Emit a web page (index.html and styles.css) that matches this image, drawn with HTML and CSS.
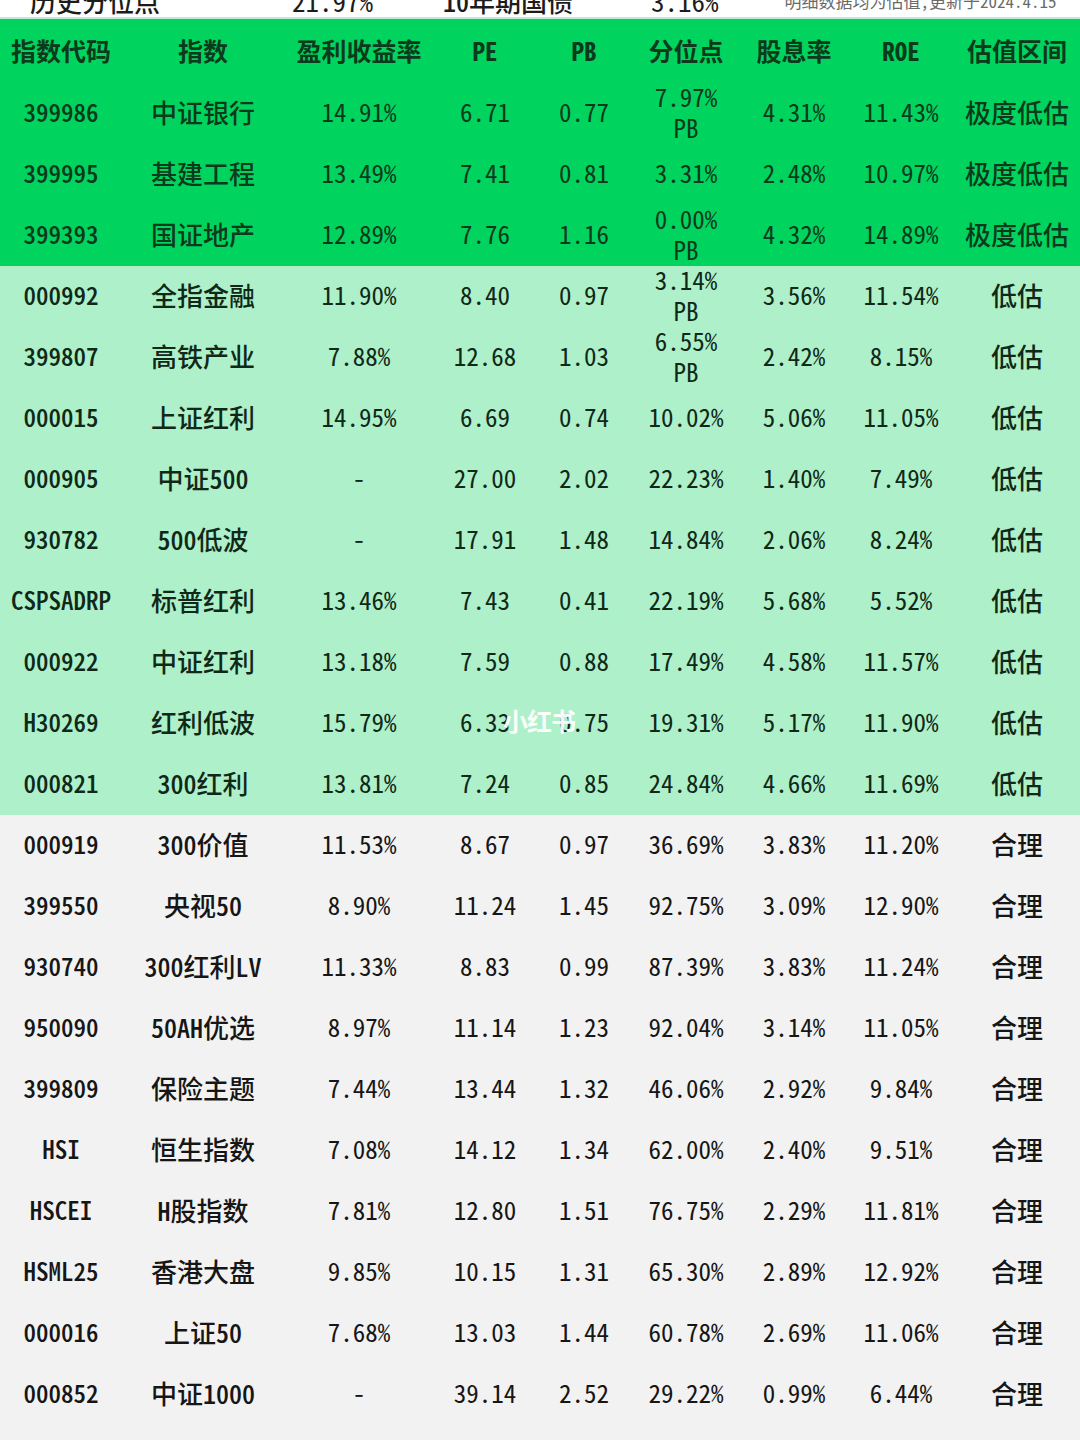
FILE: index.html
```html
<!DOCTYPE html>
<html lang="zh-CN">
<head>
<meta charset="utf-8">
<title>指数估值表</title>
<link rel="stylesheet" href="styles.css">
</head>
<body>
<div class="page">
  <div class="topbar">
    <div class="topline">
      <span class="t1">历史分位点</span>
      <span class="t2">21.97%</span>
      <span class="t3">10年期国债</span>
      <span class="t4">3.16%</span>
      <span class="t5">明细数据均为估值，更新于2024.4.15</span>
    </div>
  </div>
  <div class="table">
    <div class="row head">
      <div>指数代码</div><div>指数</div><div>盈利收益率</div><div>PE</div><div>PB</div><div>分位点</div><div>股息率</div><div>ROE</div><div>估值区间</div>
    </div>

    <div class="row deep"><div class="code">399986</div><div class="name">中证银行</div><div>14.91%</div><div>6.71</div><div>0.77</div><div class="two">7.97%<br>PB</div><div>4.31%</div><div>11.43%</div><div class="name">极度低估</div></div>
    <div class="row deep"><div class="code">399995</div><div class="name">基建工程</div><div>13.49%</div><div>7.41</div><div>0.81</div><div>3.31%</div><div>2.48%</div><div>10.97%</div><div class="name">极度低估</div></div>
    <div class="row deep"><div class="code">399393</div><div class="name">国证地产</div><div>12.89%</div><div>7.76</div><div>1.16</div><div class="two">0.00%<br>PB</div><div>4.32%</div><div>14.89%</div><div class="name">极度低估</div></div>

    <div class="row light"><div class="code">000992</div><div class="name">全指金融</div><div>11.90%</div><div>8.40</div><div>0.97</div><div class="two">3.14%<br>PB</div><div>3.56%</div><div>11.54%</div><div class="name">低估</div></div>
    <div class="row light"><div class="code">399807</div><div class="name">高铁产业</div><div>7.88%</div><div>12.68</div><div>1.03</div><div class="two">6.55%<br>PB</div><div>2.42%</div><div>8.15%</div><div class="name">低估</div></div>
    <div class="row light"><div class="code">000015</div><div class="name">上证红利</div><div>14.95%</div><div>6.69</div><div>0.74</div><div>10.02%</div><div>5.06%</div><div>11.05%</div><div class="name">低估</div></div>
    <div class="row light"><div class="code">000905</div><div class="name">中证500</div><div>-</div><div>27.00</div><div>2.02</div><div>22.23%</div><div>1.40%</div><div>7.49%</div><div class="name">低估</div></div>
    <div class="row light"><div class="code">930782</div><div class="name">500低波</div><div>-</div><div>17.91</div><div>1.48</div><div>14.84%</div><div>2.06%</div><div>8.24%</div><div class="name">低估</div></div>
    <div class="row light"><div class="code">CSPSADRP</div><div class="name">标普红利</div><div>13.46%</div><div>7.43</div><div>0.41</div><div>22.19%</div><div>5.68%</div><div>5.52%</div><div class="name">低估</div></div>
    <div class="row light"><div class="code">000922</div><div class="name">中证红利</div><div>13.18%</div><div>7.59</div><div>0.88</div><div>17.49%</div><div>4.58%</div><div>11.57%</div><div class="name">低估</div></div>
    <div class="row light"><div class="code">H30269</div><div class="name">红利低波</div><div>15.79%</div><div>6.33</div><div>0.75</div><div>19.31%</div><div>5.17%</div><div>11.90%</div><div class="name">低估</div><span class="watermark">小红书</span></div>
    <div class="row light"><div class="code">000821</div><div class="name">300红利</div><div>13.81%</div><div>7.24</div><div>0.85</div><div>24.84%</div><div>4.66%</div><div>11.69%</div><div class="name">低估</div></div>

    <div class="row grey"><div class="code">000919</div><div class="name">300价值</div><div>11.53%</div><div>8.67</div><div>0.97</div><div>36.69%</div><div>3.83%</div><div>11.20%</div><div class="name">合理</div></div>
    <div class="row grey"><div class="code">399550</div><div class="name">央视50</div><div>8.90%</div><div>11.24</div><div>1.45</div><div>92.75%</div><div>3.09%</div><div>12.90%</div><div class="name">合理</div></div>
    <div class="row grey"><div class="code">930740</div><div class="name">300红利LV</div><div>11.33%</div><div>8.83</div><div>0.99</div><div>87.39%</div><div>3.83%</div><div>11.24%</div><div class="name">合理</div></div>
    <div class="row grey"><div class="code">950090</div><div class="name">50AH优选</div><div>8.97%</div><div>11.14</div><div>1.23</div><div>92.04%</div><div>3.14%</div><div>11.05%</div><div class="name">合理</div></div>
    <div class="row grey"><div class="code">399809</div><div class="name">保险主题</div><div>7.44%</div><div>13.44</div><div>1.32</div><div>46.06%</div><div>2.92%</div><div>9.84%</div><div class="name">合理</div></div>
    <div class="row grey"><div class="code">HSI</div><div class="name">恒生指数</div><div>7.08%</div><div>14.12</div><div>1.34</div><div>62.00%</div><div>2.40%</div><div>9.51%</div><div class="name">合理</div></div>
    <div class="row grey"><div class="code">HSCEI</div><div class="name">H股指数</div><div>7.81%</div><div>12.80</div><div>1.51</div><div>76.75%</div><div>2.29%</div><div>11.81%</div><div class="name">合理</div></div>
    <div class="row grey"><div class="code">HSML25</div><div class="name">香港大盘</div><div>9.85%</div><div>10.15</div><div>1.31</div><div>65.30%</div><div>2.89%</div><div>12.92%</div><div class="name">合理</div></div>
    <div class="row grey"><div class="code">000016</div><div class="name">上证50</div><div>7.68%</div><div>13.03</div><div>1.44</div><div>60.78%</div><div>2.69%</div><div>11.06%</div><div class="name">合理</div></div>
    <div class="row grey"><div class="code">000852</div><div class="name">中证1000</div><div>-</div><div>39.14</div><div>2.52</div><div>29.22%</div><div>0.99%</div><div>6.44%</div><div class="name">合理</div></div>
    <div class="grey-tail"></div>
  </div>
</div>
</body>
</html>
```

FILE: styles.css
```css
html, body {
  margin: 0;
  padding: 0;
  background: #f2f2f2;
}

body {
  font-family: "Noto Sans CJK SC", "Noto Sans", sans-serif;
  font-feature-settings: "hwid" 1;
  color: #151515;
}

.page {
  width: 1080px;
  height: 1440px;
  overflow: hidden;
}

.topbar {
  height: 17px;
  background: #ffffff;
  overflow: hidden;
  border-bottom: 2px solid #bdebd9;
}

.topline {
  display: flex;
  align-items: center;
  height: 30px;
  margin-top: -14px;
  font-size: 26px;
  line-height: 30px;
  color: #1c1c1c;
}

.t1 { margin-left: 30px; font-weight: 500; }
.t2 { margin-left: 132px; font-size: 27px; }
.t3 { margin-left: 70px; font-weight: 500; }
.t4 { margin-left: 78px; font-size: 27px; }
.t5 { margin-left: 66px; font-size: 17px; color: #6a6a6a; }

.table {
  display: flex;
  flex-direction: column;
}

.row {
  display: grid;
  grid-template-columns: 122px 162px 150px 102px 96px 108px 108px 106px 126px;
  grid-template-rows: minmax(0, 1fr);
  box-sizing: border-box;
  height: 61px;
  padding-bottom: 4px;
  align-items: center;
  font-size: 25px;
  line-height: 31px;
  text-align: center;
  position: relative;
}

.row > div {
  white-space: nowrap;
}

.head {
  height: 64px;
  padding-bottom: 2px;
  background: #00d45f;
  color: #0b3a1c;
  font-weight: 700;
  font-size: 25px;
}

.deep {
  background: #00d45f;
  color: #0b3a1c;
}

.light {
  background: #aef0c9;
  color: #102818;
}

.grey {
  background: #f2f2f2;
  color: #161616;
}

.code {
  font-weight: 500;
}

.name {
  font-weight: 500;
  font-size: 26px;
}

.two {
  line-height: 31px;
}

.grey-tail {
  height: 20px;
  background: #f2f2f2;
}

.watermark {
  position: absolute;
  left: 503px;
  top: 12px;
  font-size: 25px;
  line-height: 30px;
  font-weight: 700;
  color: rgba(255, 255, 255, 0.95);
  letter-spacing: -1px;
}
```
